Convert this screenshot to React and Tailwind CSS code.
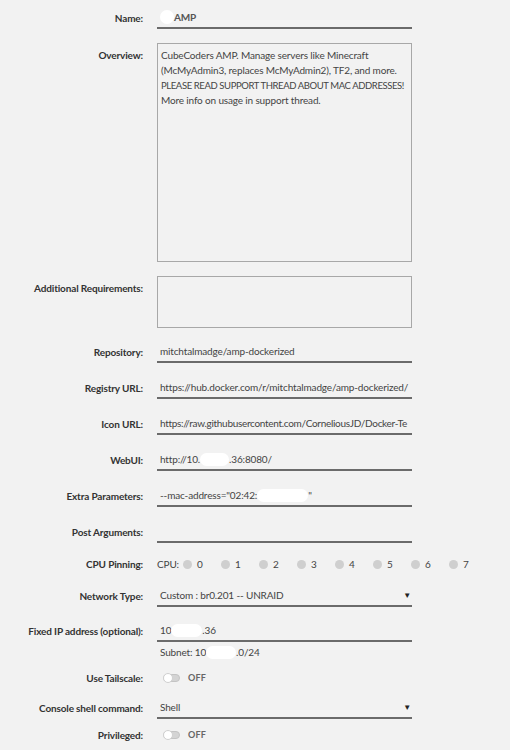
import React from 'react';

const font = { fontFamily: 'Lato, "Open Sans", sans-serif' };

function Blot({ w, h = 13 }) {
  // white masking blot over redacted values
  return <span className="inline-block bg-white rounded-full align-middle" style={{ width: w, height: h }} />;
}

function Row({ label, children, className = '', top = false }) {
  return (
    <div className={`flex ${top ? 'items-start' : 'items-center'} ${className}`}>
      <div className={`w-[157px] shrink-0 text-right font-bold text-[#333] pr-[14px] ${top ? 'pt-[5px]' : ''}`}>{label}</div>
      <div className="flex-1">{children}</div>
    </div>
  );
}

function TextLine({ children, select = false, className = '' }) {
  return (
    <div className={`w-[255px] h-[22px] border-b-2 border-[#6b6b6b] flex items-center justify-between pl-[3px] text-[#444] whitespace-nowrap overflow-hidden ${className}`}>
      <span className="flex items-center">{children}</span>
      {select && <span className="text-[8px] text-[#222] pr-[1px]">▼</span>}
    </div>
  );
}

function Toggle() {
  return (
    <div className="flex items-center gap-[8px] pl-[6px]">
      <div className="relative w-[17px] h-[8px] rounded-full bg-[#d4d4d4] border border-[#c4c4c4]">
        <div className="absolute left-[-1px] top-[-2px] w-[10px] h-[10px] rounded-full bg-white border border-[#d0d0d0]" />
      </div>
      <span className="text-[9px] font-bold text-[#666] tracking-wide">OFF</span>
    </div>
  );
}

export default function App() {
  const cpus = [0, 1, 2, 3, 4, 5, 6, 7];
  return (
    <div className="min-h-[750px] w-[510px] bg-[#f2f2f2] text-[10px] tracking-[-0.15px] leading-[14px]" style={font}>
      <div className="pt-[7px]">
        <Row label="Name:">
          <TextLine className="pl-[1px]">
            <Blot w={14} h={14} />
            <span className="font-bold text-[#555]">AMP</span>
          </TextLine>
        </Row>

        <Row label="Overview:" top className="mt-[14px]">
          <div className="w-[255px] h-[219px] border border-[#a8a8a8] px-[3px] py-[4px] text-[#444] leading-[15px] whitespace-nowrap overflow-hidden">
            CubeCoders AMP. Manage servers like Minecraft<br />
            (McMyAdmin3, replaces McMyAdmin2), TF2, and more.<br />
            <span className="text-[9.5px] tracking-[-0.4px]">PLEASE READ SUPPORT THREAD ABOUT MAC ADDRESSES!</span><br />
            More info on usage in support thread.
          </div>
        </Row>

        <Row label="Additional Requirements:" top className="mt-[14px]">
          <div className="w-[255px] h-[52px] border border-[#a8a8a8]" />
        </Row>

        <Row label="Repository:" className="mt-[13px]">
          <TextLine>mitchtalmadge/amp-dockerized</TextLine>
        </Row>
        <Row label="Registry URL:" className="mt-[14px]">
          <TextLine>https://hub.docker.com/r/mitchtalmadge/amp-dockerized/</TextLine>
        </Row>
        <Row label="Icon URL:" className="mt-[14px]">
          <TextLine className="tracking-[-0.3px]">https://raw.githubusercontent.com/CorneliousJD/Docker-Te</TextLine>
        </Row>
        <Row label="WebUI:" className="mt-[14px]">
          <TextLine>
            http://10.<Blot w={29} />.36:8080/
          </TextLine>
        </Row>
        <Row label="Extra Parameters:" className="mt-[14px]">
          <TextLine>
            --mac-address="02:42:<Blot w={51} />"
          </TextLine>
        </Row>
        <Row label="Post Arguments:" className="mt-[14px]">
          <TextLine></TextLine>
        </Row>

        <Row label="CPU Pinning:" className="mt-[12px]">
          <div className="flex items-center text-[#444] h-[18px]">
            <span className="mr-[4px]">CPU:</span>
            {cpus.map((c) => (
              <span key={c} className="flex items-center w-[38px]">
                <span className="w-[9px] h-[9px] rounded-full bg-[#cfcfcf] mr-[5px]" />
                <span>{c}</span>
              </span>
            ))}
          </div>
        </Row>

        <Row label="Network Type:" className="mt-[12px]">
          <TextLine select>Custom : br0.201 -- UNRAID</TextLine>
        </Row>
        <Row label="Fixed IP address (optional):" className="mt-[13px]">
          <TextLine>
            10<Blot w={31} />.36
          </TextLine>
        </Row>
        <div className="flex">
          <div className="w-[157px] shrink-0" />
          <div className="pl-[3px] pt-[3px] text-[#444] flex items-center">
            Subnet: 10<Blot w={30} />.0/24
          </div>
        </div>

        <Row label="Use Tailscale:" className="mt-[12px]">
          <Toggle />
        </Row>
        <Row label="Console shell command:" className="mt-[12px]">
          <TextLine select>Shell</TextLine>
        </Row>
        <Row label="Privileged:" className="mt-[9px]">
          <Toggle />
        </Row>
      </div>
    </div>
  );
}
